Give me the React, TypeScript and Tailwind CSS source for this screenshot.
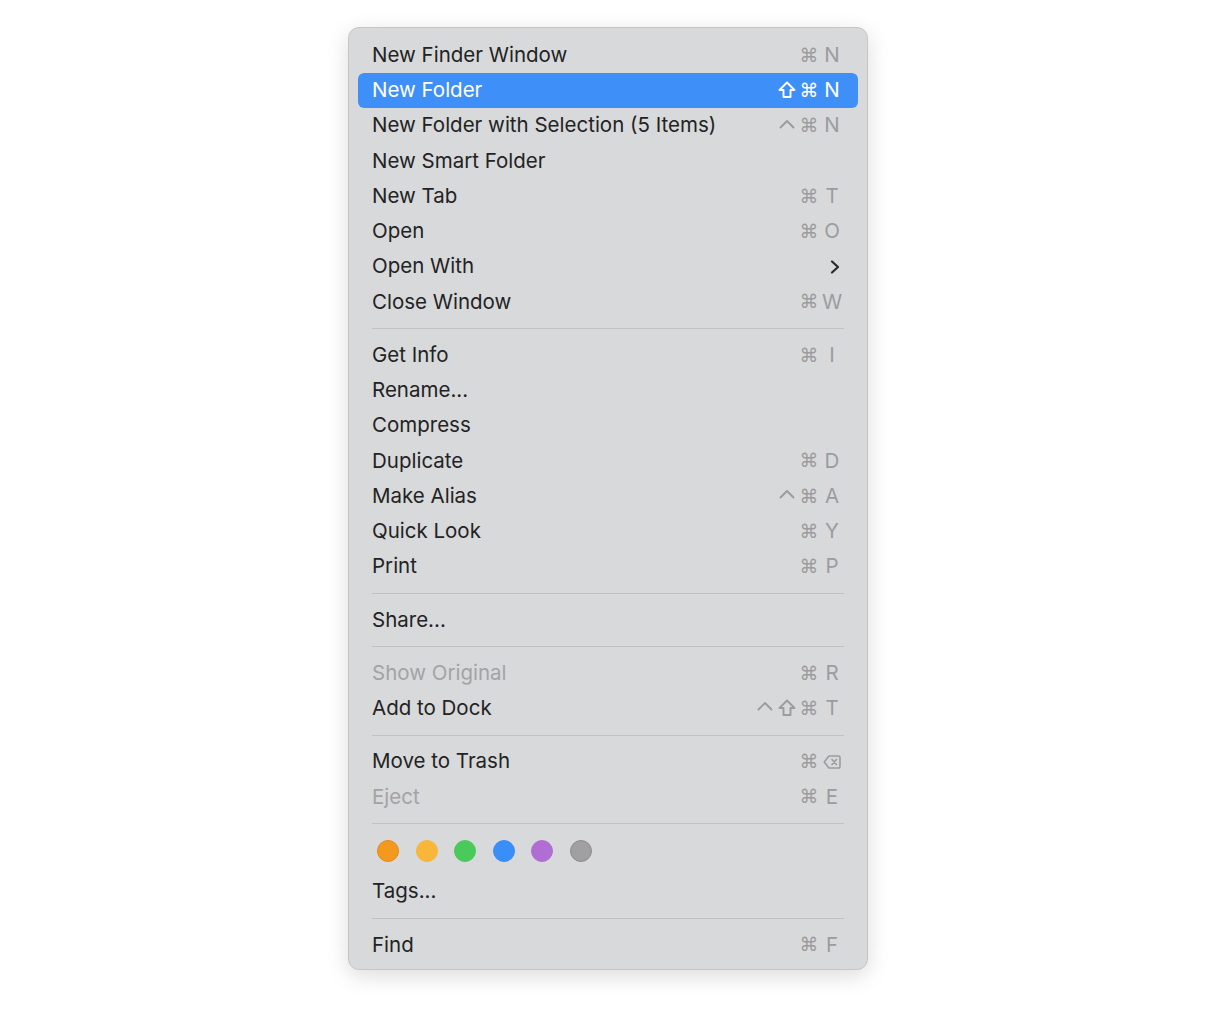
import React from "react";

type Item = {
  label?: string;
  mods?: string[];
  keyc?: string;
  disabled?: boolean;
  active?: boolean;
  submenu?: boolean;
  sep?: boolean;
  tags?: boolean;
};

const items: Item[] = [
  { label: "New Finder Window", mods: ["cmd"], keyc: "N" },
  { label: "New Folder", mods: ["shift", "cmd"], keyc: "N", active: true },
  { label: "New Folder with Selection (5 Items)", mods: ["ctrl", "cmd"], keyc: "N" },
  { label: "New Smart Folder" },
  { label: "New Tab", mods: ["cmd"], keyc: "T" },
  { label: "Open", mods: ["cmd"], keyc: "O" },
  { label: "Open With", submenu: true },
  { label: "Close Window", mods: ["cmd"], keyc: "W" },
  { sep: true },
  { label: "Get Info", mods: ["cmd"], keyc: "I" },
  { label: "Rename..." },
  { label: "Compress" },
  { label: "Duplicate", mods: ["cmd"], keyc: "D" },
  { label: "Make Alias", mods: ["ctrl", "cmd"], keyc: "A" },
  { label: "Quick Look", mods: ["cmd"], keyc: "Y" },
  { label: "Print", mods: ["cmd"], keyc: "P" },
  { sep: true },
  { label: "Share..." },
  { sep: true },
  { label: "Show Original", mods: ["cmd"], keyc: "R", disabled: true },
  { label: "Add to Dock", mods: ["ctrl", "shift", "cmd"], keyc: "T" },
  { sep: true },
  { label: "Move to Trash", mods: ["cmd"], keyc: "del" },
  { label: "Eject", mods: ["cmd"], keyc: "E", disabled: true },
  { sep: true },
  { tags: true },
  { label: "Tags..." },
  { sep: true },
  { label: "Find", mods: ["cmd"], keyc: "F" },
];

const tagColors = [
  { bg: "bg-[#f39a1e]", border: "border-[#e58a10]" },
  { bg: "bg-[#f8b63a]", border: "border-[#f8b63a]" },
  { bg: "bg-[#4bca5c]", border: "border-[#4bca5c]" },
  { bg: "bg-[#3a8ef7]", border: "border-[#3a8ef7]" },
  { bg: "bg-[#b06dd2]", border: "border-[#b06dd2]" },
  { bg: "bg-[#a0a0a2]", border: "border-[#8c8c8e]" },
];

function Mod({ m }: { m: string }) {
  if (m === "cmd")
    return (
      <span
        className="w-[22px] text-center text-[19px] leading-none"
        style={{ fontFamily: '"DejaVu Sans", sans-serif' }}
      >
        ⌘
      </span>
    );
  if (m === "shift")
    return (
      <span className="w-[22px] flex justify-center">
        <svg width="20" height="20" viewBox="0 0 20 20">
          <path
            d="M10 2.5 L17.5 10 H13.5 V17 H6.5 V10 H2.5 Z"
            fill="none"
            stroke="currentColor"
            strokeWidth="1.9"
            strokeLinejoin="round"
          />
        </svg>
      </span>
    );
  return (
    <span className="w-[22px] flex justify-center">
      <svg width="20" height="20" viewBox="0 0 20 20">
        <path
          d="M3.5 11.5 L10 5 L16.5 11.5"
          fill="none"
          stroke="currentColor"
          strokeWidth="1.9"
          strokeLinecap="round"
          strokeLinejoin="round"
        />
      </svg>
    </span>
  );
}

function Row({ it }: { it: Item }) {
  const textColor = it.active
    ? "text-white"
    : it.disabled
    ? "text-[#a3a3a5]"
    : "text-[#232323]";
  const scColor = it.active ? "text-white" : "text-[#9c9c9e]";
  return (
    <div
      className={`h-[35.25px] mx-[9px] flex items-center pl-[14px] pr-[16px] rounded-[6px] ${
        it.active ? "bg-[#3e8ff8]" : ""
      }`}
    >
      <span className={`flex-1 text-[20.5px] leading-none ${textColor}`}>{it.label}</span>
      {it.mods && (
        <div className={`flex items-center ${scColor}`}>
          {it.mods.map((m, i) => (
            <Mod key={i} m={m} />
          ))}
          {it.keyc === "del" ? (
            <span className="w-[20px] ml-[2px] flex justify-center">
              <svg width="18" height="16" viewBox="0 0 18 16">
                <path
                  d="M6 2 H15.5 A1.5 1.5 0 0 1 17 3.5 V12.5 A1.5 1.5 0 0 1 15.5 14 H6 L1.2 8 Z"
                  fill="none"
                  stroke="currentColor"
                  strokeWidth="1.6"
                  strokeLinejoin="round"
                />
                <path d="M9 5.5 L13.5 10.5 M13.5 5.5 L9 10.5" stroke="currentColor" strokeWidth="1.6" strokeLinecap="round" />
              </svg>
            </span>
          ) : (
            <span className="w-[20px] ml-[2px] text-center text-[20.5px] leading-none">{it.keyc}</span>
          )}
        </div>
      )}
      {it.submenu && (
        <svg width="20" height="20" viewBox="0 0 20 20" className="mr-[-3px]">
          <path
            d="M7 4.5 L13 10 L7 15.5"
            fill="none"
            stroke="#2a2a2a"
            strokeWidth="2.2"
            strokeLinecap="round"
            strokeLinejoin="round"
          />
        </svg>
      )}
    </div>
  );
}

export default function App() {
  return (
    <div className="min-h-screen bg-white pt-[27px]" style={{ fontFamily: 'Inter, "Noto Sans", sans-serif' }}>
      <div className="mx-auto w-[520px] bg-[#d8d9db] border border-[#c6c6c8] rounded-[11px] shadow-[0_6px_22px_rgba(0,0,0,0.14)] pt-[9.5px] pb-[6px]">
        {items.map((it, i) => {
          if (it.sep)
            return (
              <div key={i} className="h-[18px] flex items-center px-[23px]">
                <div className="h-px w-full bg-[#c2c2c4]" />
              </div>
            );
          if (it.tags)
            return (
              <div key={i} className="h-[41.5px] flex items-start pt-[7px] pl-[28px] gap-[16.5px]">
                {tagColors.map((c, j) => (
                  <span key={j} className={`w-[22px] h-[22px] rounded-full border ${c.bg} ${c.border}`} />
                ))}
              </div>
            );
          return <Row key={i} it={it} />;
        })}
      </div>
    </div>
  );
}
